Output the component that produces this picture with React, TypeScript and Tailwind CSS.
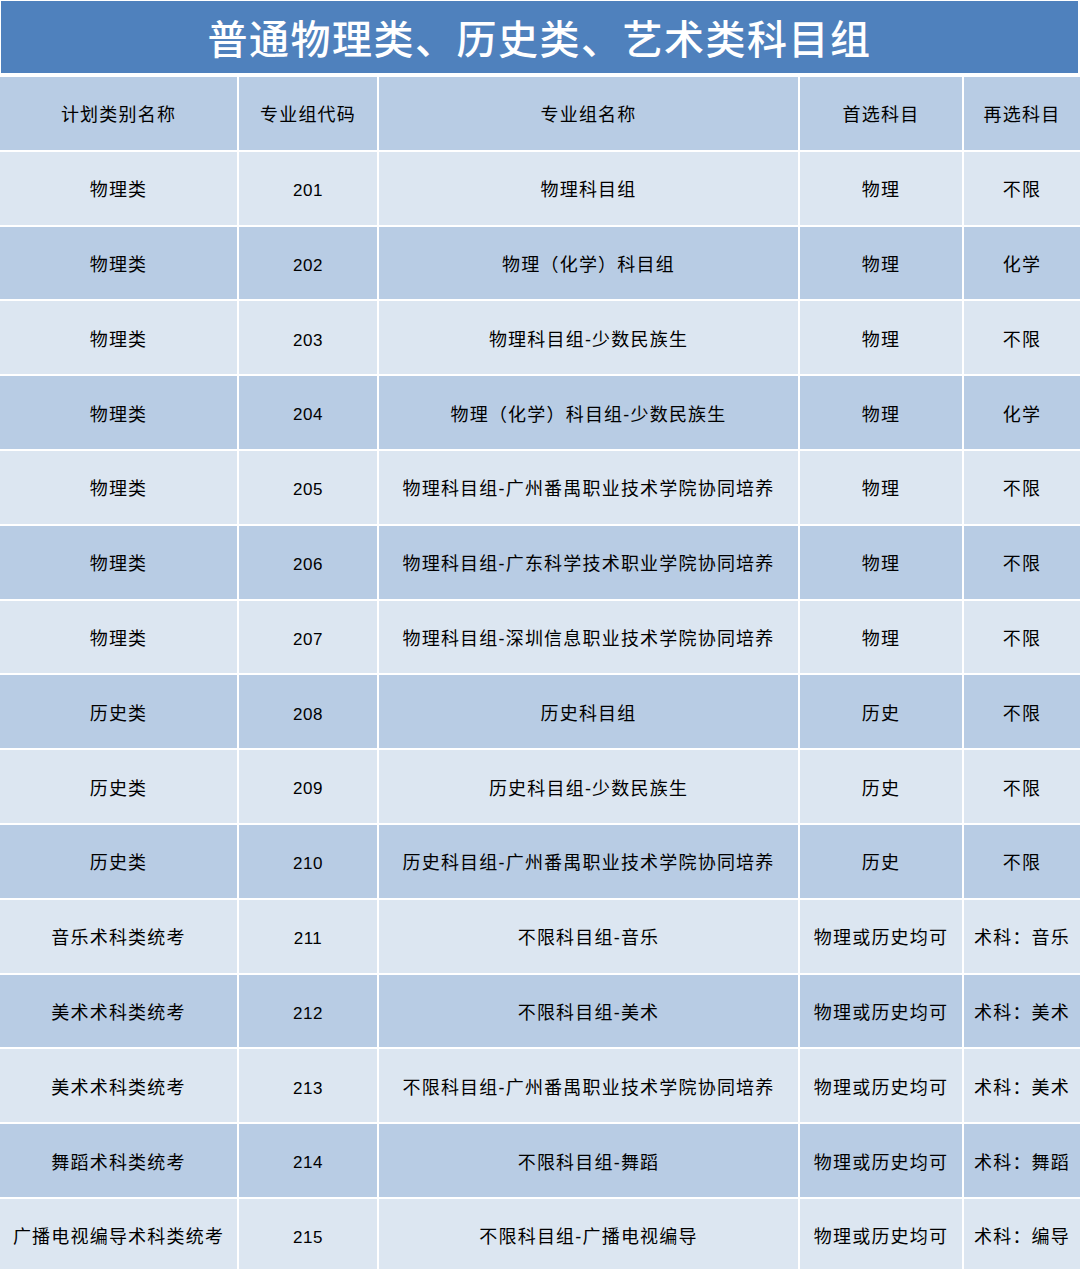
import React from "react";

const rows: [string, string, string, string, string][] = [
  ["物理类", "201", "物理科目组", "物理", "不限"],
  ["物理类", "202", "物理（化学）科目组", "物理", "化学"],
  ["物理类", "203", "物理科目组-少数民族生", "物理", "不限"],
  ["物理类", "204", "物理（化学）科目组-少数民族生", "物理", "化学"],
  ["物理类", "205", "物理科目组-广州番禺职业技术学院协同培养", "物理", "不限"],
  ["物理类", "206", "物理科目组-广东科学技术职业学院协同培养", "物理", "不限"],
  ["物理类", "207", "物理科目组-深圳信息职业技术学院协同培养", "物理", "不限"],
  ["历史类", "208", "历史科目组", "历史", "不限"],
  ["历史类", "209", "历史科目组-少数民族生", "历史", "不限"],
  ["历史类", "210", "历史科目组-广州番禺职业技术学院协同培养", "历史", "不限"],
  ["音乐术科类统考", "211", "不限科目组-音乐", "物理或历史均可", "术科：音乐"],
  ["美术术科类统考", "212", "不限科目组-美术", "物理或历史均可", "术科：美术"],
  ["美术术科类统考", "213", "不限科目组-广州番禺职业技术学院协同培养", "物理或历史均可", "术科：美术"],
  ["舞蹈术科类统考", "214", "不限科目组-舞蹈", "物理或历史均可", "术科：舞蹈"],
  ["广播电视编导术科类统考", "215", "不限科目组-广播电视编导", "物理或历史均可", "术科：编导"],
];

const headers = ["计划类别名称", "专业组代码", "专业组名称", "首选科目", "再选科目"];

export default function App() {
  return (
    <div
      className="w-[1080px] h-[1269px] bg-white overflow-hidden"
      style={{ fontFamily: '"Liberation Sans", "Noto Sans CJK SC", sans-serif' }}
    >
      <div className="pt-px pl-px pr-[2px]">
        <div className="h-[72px] pt-[6px] bg-[#4f81bd] flex items-center justify-center text-white text-[40px] font-medium tracking-[1.5px] leading-none">
          普通物理类、历史类、艺术类科目组
        </div>
      </div>
      <div className="mt-[4px] grid grid-cols-[237px_138px_419px_162px_116px] gap-[2px] auto-rows-[72.8px] text-[18px] text-black tracking-[1.2px]">
        {headers.map((h, i) => (
          <div key={"h" + i} className="bg-[#b8cce4] pt-[4px] flex items-center justify-center whitespace-nowrap">
            {h}
          </div>
        ))}
        {rows.map((r, ri) =>
          r.map((c, ci) => (
            <div
              key={ri + "-" + ci}
              className={
                (ri % 2 === 0 ? "bg-[#dce6f1]" : "bg-[#b8cce4]") +
                " pt-[5px] flex items-center justify-center whitespace-nowrap"
              }
            >
              {ci === 1 ? <span className="text-[17px] tracking-[0.5px]">{c}</span> : c}
            </div>
          ))
        )}
      </div>
    </div>
  );
}
